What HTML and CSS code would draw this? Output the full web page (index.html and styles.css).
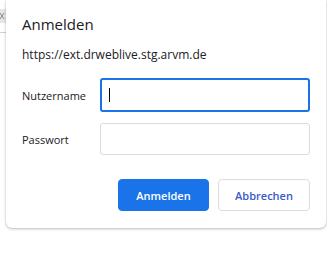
FILE: index.html
```html
<!DOCTYPE html>
<html>
<head>
<meta charset="utf-8">
<link rel="stylesheet" href="styles.css">
</head>
<body>
<div class="backdrop">
  <div class="tab">
    <svg width="6" height="14" viewBox="0 0 6 14"><path d="M0 4 L4 10 M4 4 L0 10" stroke="#8a8a8a" stroke-width="1" fill="none"/></svg>
  </div>
  <div class="tabline"></div>
</div>
<div class="stage">
  <div class="dialog">
    <h1 class="title">Anmelden</h1>
    <div class="origin">https://ext.drweblive.stg.arvm.de</div>
    <div class="form">
      <label class="label">Nutzername</label>
      <div class="input focused"><span class="caret"></span></div>
      <label class="label">Passwort</label>
      <div class="input"></div>
    </div>
    <div class="actions">
      <button class="btn primary">Anmelden</button>
      <button class="btn secondary">Abbrechen</button>
    </div>
  </div>
</div>
</body>
</html>
```
FILE: styles.css
```css
html, body {
  margin: 0;
  padding: 0;
  background: #ffffff;
  width: 327px;
  height: 280px;
  overflow: hidden;
  font-family: "Open Sans", "Noto Sans", sans-serif;
}
.backdrop {
  position: absolute;
  left: 0;
  top: 0;
  width: 6px;
  height: 40px;
}
.tab {
  position: absolute;
  left: 0;
  top: 9px;
  width: 6px;
  height: 14px;
  background: #e6e6e6;
}
.tab svg {
  display: block;
}
.tabline {
  position: absolute;
  left: 0;
  top: 32px;
  width: 6px;
  height: 1px;
  background: #d0d0d0;
}
.stage {
  padding-left: 6px;
}
.dialog {
  position: relative;
  width: 320px;
  height: 228px;
  box-sizing: border-box;
  background: #ffffff;
  border-radius: 0 0 6px 6px;
  box-shadow: 0 1px 3px rgba(0,0,0,0.25), 0 0 1px rgba(0,0,0,0.2);
  padding: 14px 16px 0 16px;
  display: flex;
  flex-direction: column;
}
.title {
  margin: 0;
  font-weight: 400;
  font-size: 15px;
  line-height: 20px;
  color: #202124;
}
.origin {
  margin-top: 13px;
  font-size: 12px;
  line-height: 15px;
  color: #202124;
}
.form {
  margin-top: 16px;
  display: grid;
  grid-template-columns: 78px 210px;
  row-gap: 11px;
  align-items: center;
}
.label {
  font-size: 11px;
  color: #202124;
}
.input {
  height: 32px;
  box-sizing: border-box;
  border: 1px solid #dadce0;
  border-radius: 3px;
  display: flex;
  align-items: center;
  padding-left: 8px;
}
.input.focused {
  height: 34px;
  border: 2px solid #1a73e8;
  padding-left: 7px;
}
.caret {
  width: 1px;
  height: 14px;
  background: #000;
}
.actions {
  margin-top: 24px;
  display: flex;
  justify-content: flex-end;
  gap: 9px;
}
.btn {
  height: 32px;
  box-sizing: border-box;
  border-radius: 4px;
  font-family: inherit;
  font-size: 11px;
  font-weight: 600;
  padding: 0;
}
.primary {
  width: 91px;
  background: #1a73e8;
  border: 1px solid #1a73e8;
  color: #ffffff;
}
.secondary {
  width: 92px;
  background: #ffffff;
  border: 1px solid #dadce0;
  color: #3a5bc7;
}
```
